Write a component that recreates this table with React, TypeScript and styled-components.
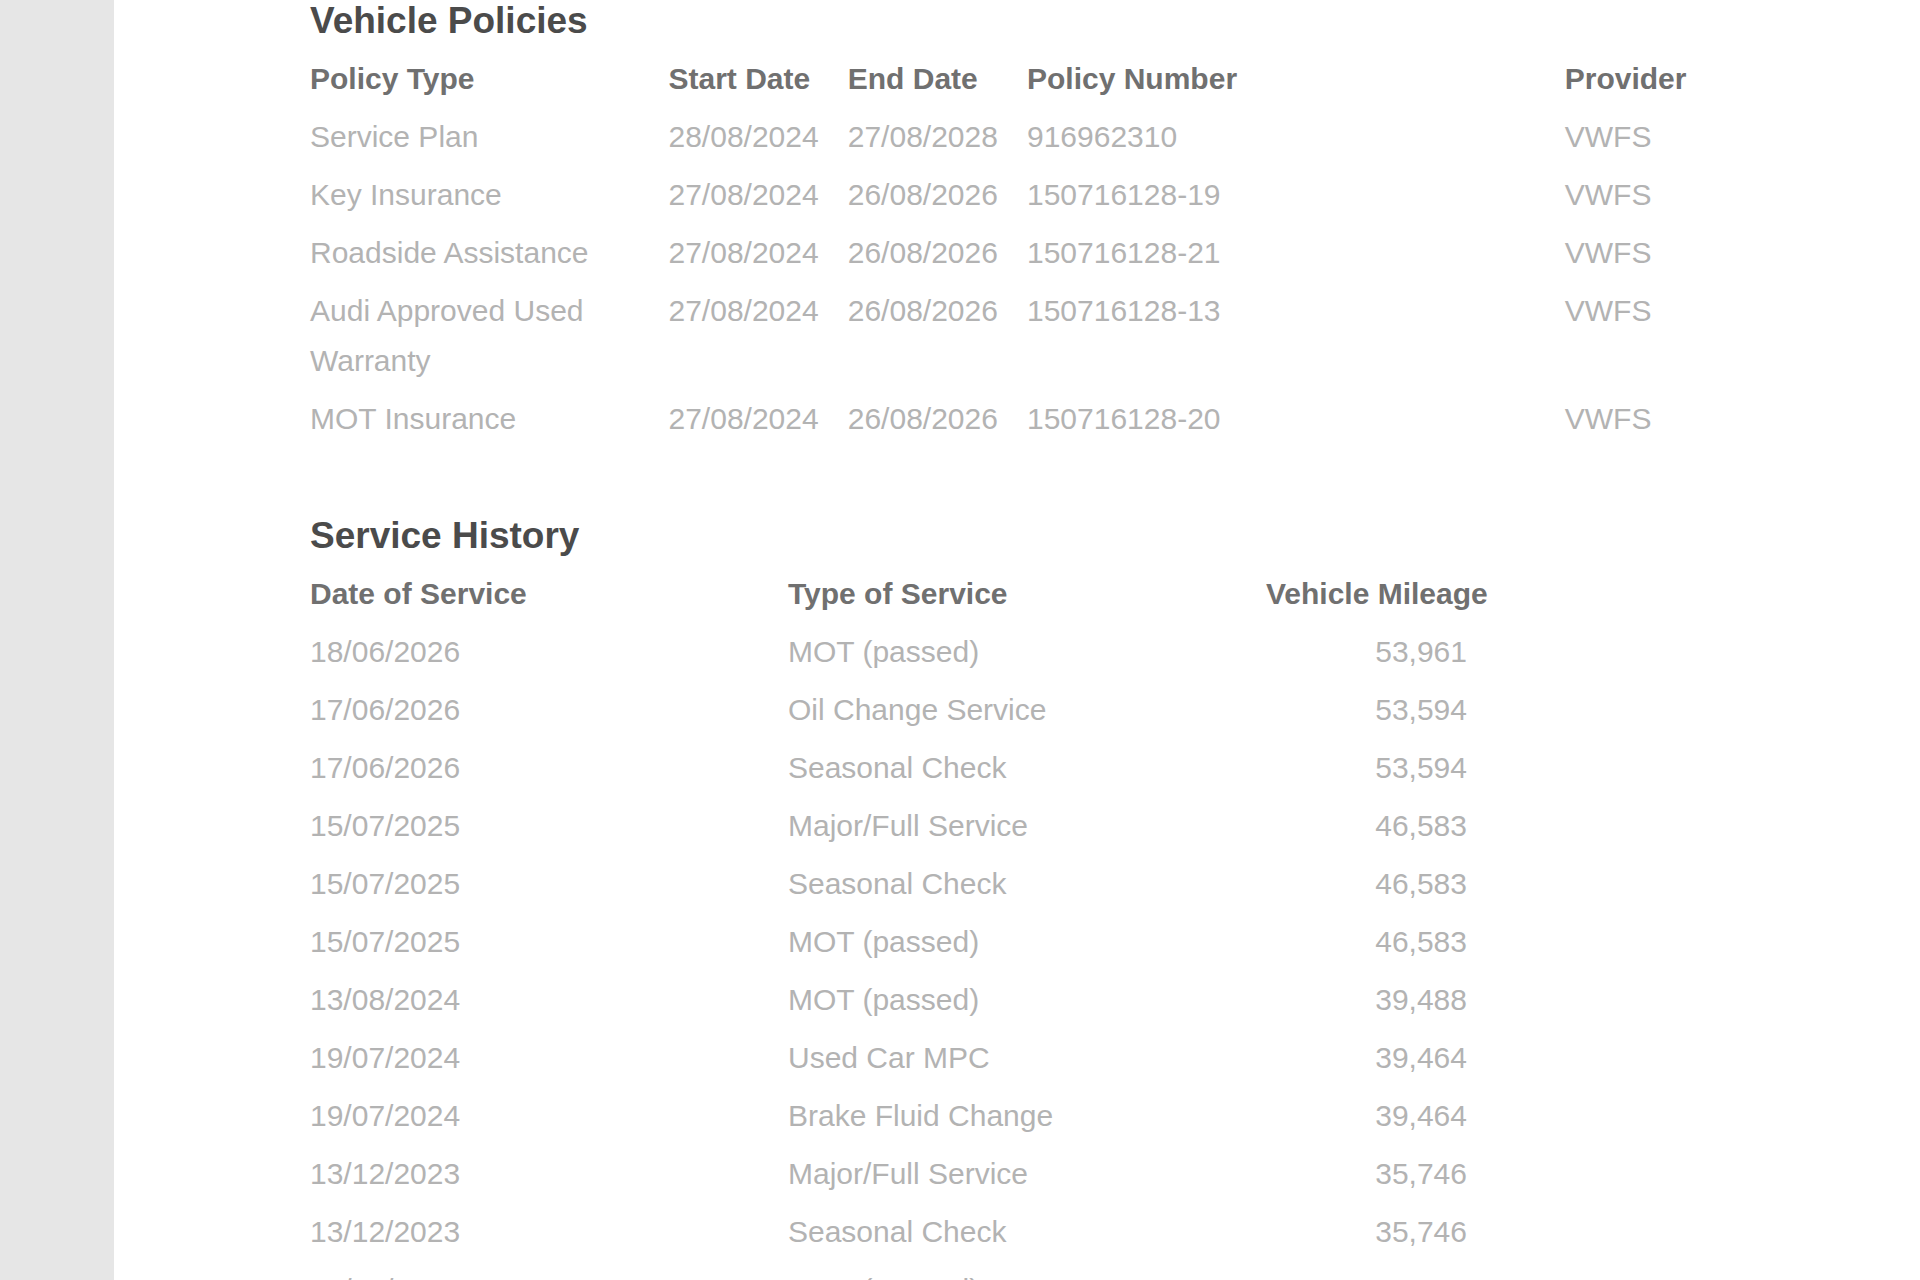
import React from "react";
import styled, { createGlobalStyle } from "styled-components";

const GlobalStyle = createGlobalStyle`
  html, body {
    margin: 0;
    padding: 0;
    background: #ffffff;
    font-family: "Liberation Sans", Arial, sans-serif;
  }
  #root {
    min-height: 100vh;
  }
`;

const Page = styled.div`
  display: flex;
  min-height: 100vh;
  background: #ffffff;
`;

const Sidebar = styled.aside`
  flex: 0 0 114px;
  background: #e6e6e6;
`;

const Main = styled.main`
  flex: 1;
  padding: 2px 0 0 196px;
`;

const Content = styled.div`
  width: 1434px;
  display: flex;
  flex-direction: column;
`;

const Section = styled.section<{ $gap?: number }>`
  margin-top: ${(p) => p.$gap ?? 0}px;
`;

const Heading = styled.h2`
  margin: 0 0 11px 0;
  font-size: 37px;
  line-height: 37px;
  font-weight: 700;
  color: #4b4b4b;
`;

const Table = styled.table`
  width: 100%;
  table-layout: fixed;
  border-collapse: collapse;
  border-spacing: 0;
`;

const Col = styled.col<{ $w: string }>`
  width: ${(p) => p.$w};
`;

const Th = styled.th`
  padding: 4px 0;
  text-align: left;
  vertical-align: top;
  font-size: 30px;
  line-height: 50px;
  font-weight: 700;
  color: #707070;
  white-space: nowrap;
`;

const Td = styled.td`
  padding: 4px 0;
  text-align: left;
  vertical-align: top;
  font-size: 30px;
  line-height: 50px;
  font-weight: 400;
  color: #b3b3b3;
`;

const Mileage = styled.span`
  display: inline-block;
  width: 201px;
  text-align: right;
`;

const policies = [
  ["Service Plan", "28/08/2024", "27/08/2028", "916962310", "VWFS"],
  ["Key Insurance", "27/08/2024", "26/08/2026", "150716128-19", "VWFS"],
  ["Roadside Assistance", "27/08/2024", "26/08/2026", "150716128-21", "VWFS"],
  ["Audi Approved Used Warranty", "27/08/2024", "26/08/2026", "150716128-13", "VWFS"],
  ["MOT Insurance", "27/08/2024", "26/08/2026", "150716128-20", "VWFS"],
];

const services = [
  ["18/06/2026", "MOT (passed)", "53,961"],
  ["17/06/2026", "Oil Change Service", "53,594"],
  ["17/06/2026", "Seasonal Check", "53,594"],
  ["15/07/2025", "Major/Full Service", "46,583"],
  ["15/07/2025", "Seasonal Check", "46,583"],
  ["15/07/2025", "MOT (passed)", "46,583"],
  ["13/08/2024", "MOT (passed)", "39,488"],
  ["19/07/2024", "Used Car MPC", "39,464"],
  ["19/07/2024", "Brake Fluid Change", "39,464"],
  ["13/12/2023", "Major/Full Service", "35,746"],
  ["13/12/2023", "Seasonal Check", "35,746"],
  ["13/12/2023", "MOT (passed)", "35,746"],
];

export default function App() {
  return (
    <>
      <GlobalStyle />
      <Page>
        <Sidebar />
        <Main>
          <Content>
            <Section>
              <Heading>Vehicle Policies</Heading>
              <Table>
                <colgroup>
                  <Col $w="25%" />
                  <Col $w="12.5%" />
                  <Col $w="12.5%" />
                  <Col $w="37.5%" />
                  <Col $w="12.5%" />
                </colgroup>
                <thead>
                  <tr>
                    <Th>Policy Type</Th>
                    <Th>Start Date</Th>
                    <Th>End Date</Th>
                    <Th>Policy Number</Th>
                    <Th>Provider</Th>
                  </tr>
                </thead>
                <tbody>
                  {policies.map((r, i) => (
                    <tr key={i}>
                      {r.map((c, j) => (
                        <Td key={j}>{c}</Td>
                      ))}
                    </tr>
                  ))}
                </tbody>
              </Table>
            </Section>
            <Section $gap={69}>
              <Heading>Service History</Heading>
              <Table>
                <colgroup>
                  <Col $w="33.333%" />
                  <Col $w="33.333%" />
                  <Col $w="33.334%" />
                </colgroup>
                <thead>
                  <tr>
                    <Th>Date of Service</Th>
                    <Th>Type of Service</Th>
                    <Th>Vehicle Mileage</Th>
                  </tr>
                </thead>
                <tbody>
                  {services.map((r, i) => (
                    <tr key={i}>
                      <Td>{r[0]}</Td>
                      <Td>{r[1]}</Td>
                      <Td>
                        <Mileage>{r[2]}</Mileage>
                      </Td>
                    </tr>
                  ))}
                </tbody>
              </Table>
            </Section>
          </Content>
        </Main>
      </Page>
    </>
  );
}
